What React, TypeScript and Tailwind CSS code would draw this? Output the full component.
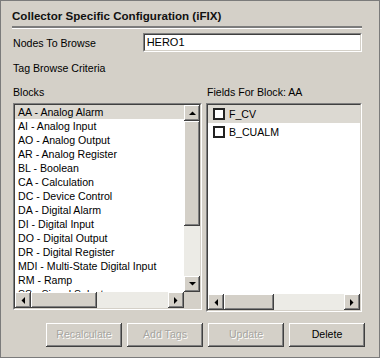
import React from "react";

const raised =
  "bg-[#d4d0c8] shadow-[inset_-1px_-1px_0_#404040,inset_1px_1px_0_#ffffff,inset_-2px_-2px_0_#808080,inset_2px_2px_0_#d4d0c8]";

function Arrow({ dir }: { dir: "up" | "down" | "left" | "right" }) {
  const pts: Record<string, string> = {
    up: "0,4 7,4 3.5,0.5",
    down: "0,0 7,0 3.5,3.5",
    left: "4,0 4,7 0.5,3.5",
    right: "0,0 0,7 3.5,3.5",
  };
  const vertical = dir === "up" || dir === "down";
  return (
    <div className={`${raised} w-[16px] h-[16px] flex items-center justify-center shrink-0`}>
      <svg width={vertical ? 7 : 4} height={vertical ? 4 : 7} viewBox={vertical ? "0 0 7 4" : "0 0 4 7"}>
        <polygon points={pts[dir]} fill="#000" />
      </svg>
    </div>
  );
}

function Sunken({ className, children }: { className: string; children: React.ReactNode }) {
  return (
    <div className={`border border-t-[#808080] border-l-[#808080] border-b-white border-r-white ${className}`}>
      <div className="w-full h-full border border-t-[#404040] border-l-[#404040] border-b-[#d4d0c8] border-r-[#d4d0c8] bg-white">
        {children}
      </div>
    </div>
  );
}

const blocks = [
  "AA - Analog Alarm",
  "AI - Analog Input",
  "AO - Analog Output",
  "AR - Analog Register",
  "BL - Boolean",
  "CA - Calculation",
  "DC - Device Control",
  "DA - Digital Alarm",
  "DI - Digital Input",
  "DO - Digital Output",
  "DR - Digital Register",
  "MDI - Multi-State Digital Input",
  "RM - Ramp",
  "SS - Signal Select",
];

function Button({ label, disabled }: { label: string; disabled?: boolean }) {
  return (
    <div
      className={`${raised} w-[76px] h-[24px] flex items-center justify-center ${
        disabled ? "text-[#a7a6a1] [text-shadow:1px_1px_0_#ffffff]" : "text-black"
      }`}
    >
      {label}
    </div>
  );
}

export default function App() {
  return (
    <div
      className="w-[380px] h-[358px] bg-[#d4d0c8] border border-[#7b7b7b] pl-[11px] pr-[17px] pt-[8px] text-[10.6px] text-black overflow-hidden"
      style={{ fontFamily: '"Liberation Sans", Arial, sans-serif' }}
    >
      <div className="font-bold text-[11.6px] leading-[14px] text-[#111]">
        Collector Specific Configuration (iFIX)
      </div>
      <div className="mt-[3px] h-[2px] bg-[#7c7c7c]" />
      <div className="h-[1px] bg-white" />

      <div className="mt-[4px] flex items-center">
        <div className="w-[130px] ml-[1px] leading-[14px]">Nodes To Browse</div>
        <Sunken className="w-[220px] h-[19px]">
          <div className="pl-[2px] leading-[15px] text-[11px]">HERO1</div>
        </Sunken>
      </div>

      <div className="mt-[9px] ml-[1px] leading-[14px]">Tag Browse Criteria</div>

      <div className="mt-[10px] flex items-start">
        <div className="ml-[1px] w-[189px] flex flex-col">
          <div className="leading-[14px]">Blocks</div>
          <Sunken className="mt-[4px] w-[189px] h-[207px]">
            <div className="grid grid-cols-[1fr_16px] grid-rows-[1fr_16px] w-full h-full">
              <div className="overflow-hidden">
                {blocks.map((b, i) => (
                  <div
                    key={b}
                    className={`h-[14px] leading-[14px] pl-[3px] whitespace-nowrap ${
                      i === 0 ? "bg-[#dcd9d2]" : ""
                    }`}
                  >
                    {b}
                  </div>
                ))}
              </div>
              <div className="flex flex-col bg-[#ecebe6]">
                <Arrow dir="up" />
                <div className={`${raised} h-[105px] w-[16px]`} />
                <div className="flex-1" />
                <Arrow dir="down" />
              </div>
              <div className="flex bg-[#ecebe6]">
                <Arrow dir="left" />
                <div className={`${raised} w-[66px] h-[16px]`} />
                <div className="flex-1" />
                <Arrow dir="right" />
              </div>
              <div className="bg-[#d4d0c8]" />
            </div>
          </Sunken>
        </div>

        <div className="ml-[4px] w-[156px] flex flex-col">
          <div className="leading-[14px] ml-[1px]">Fields For Block: AA</div>
          <Sunken className="mt-[4px] w-[156px] h-[209px]">
            <div className="flex flex-col w-full h-full">
              <div className="flex-1 overflow-hidden">
                {["F_CV", "B_CUALM"].map((f, i) => (
                  <div
                    key={f}
                    className={`h-[18px] flex items-center pl-[5px] ${i === 0 ? "bg-[#dcd9d2]" : ""}`}
                  >
                    <div className="w-[12px] h-[12px] border-2 border-[#222] bg-white shrink-0" />
                    <div className="ml-[4px] leading-[14px]">{f}</div>
                  </div>
                ))}
              </div>
              <div className="flex bg-[#ecebe6] h-[16px]">
                <Arrow dir="left" />
                <div className={`${raised} w-[50px] h-[16px]`} />
                <div className="flex-1" />
                <Arrow dir="right" />
              </div>
            </div>
          </Sunken>
        </div>
      </div>

      <div className="mt-[11px] -mr-[3px] flex justify-end gap-[5px]">
        <Button label="Recalculate" disabled />
        <Button label="Add Tags" disabled />
        <Button label="Update" disabled />
        <Button label="Delete" />
      </div>
    </div>
  );
}
